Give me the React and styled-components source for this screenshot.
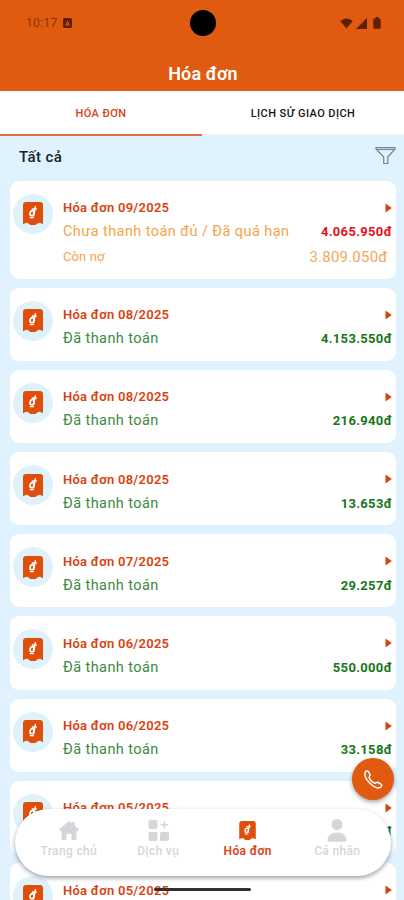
import React from "react";
import styled, { createGlobalStyle } from "styled-components";

const ORANGE = "#e05b10";
const RED = "#d9420f";

const GlobalStyle = createGlobalStyle`
  * { box-sizing: border-box; }
  body { margin: 0; overflow: hidden; font-family: Roboto, "Noto Sans", sans-serif; background: #dff2fe; }
  #root { height: 900px; }
`;

const Screen = styled.div`
  position: relative;
  width: 404px;
  height: 900px;
  overflow: hidden;
  display: flex;
  flex-direction: column;
  background: #dff2fe;
`;

const Header = styled.header`
  height: 90.5px;
  flex: none;
  background: ${ORANGE};
`;

const StatusBar = styled.div`
  height: 46px;
  padding: 0 23px 0 26px;
  display: grid;
  grid-template-columns: 1fr 26px 1fr;
  align-items: center;
  color: #5e1f05;
`;

const StatusGroup = styled.div`
  display: flex;
  align-items: center;
  justify-content: ${(p) => (p.$end ? "flex-end" : "flex-start")};
  gap: ${(p) => p.$gap}px;
`;

const Clock = styled.span`
  font-size: 12px;
  letter-spacing: 0.35px;
  color: #8a3409;
`;

const Camera = styled.div`
  width: 26px;
  height: 26px;
  margin-left: -1px;
  border-radius: 50%;
  background: #000;
`;

const PageTitle = styled.h1`
  margin: 16px 0 0;
  padding-left: 2px;
  text-align: center;
  font-size: 18px;
  line-height: 24px;
  font-weight: 600;
  letter-spacing: 0.1px;
  color: #fff;
`;

const Tabs = styled.nav`
  height: 45.5px;
  flex: none;
  display: grid;
  grid-template-columns: 1fr 1fr;
  background: #fff;
`;

const Tab = styled.div`
  display: flex;
  align-items: center;
  justify-content: center;
  padding-top: 2px;
  font-size: 11px;
  font-weight: 500;
  letter-spacing: ${(p) => (p.$active ? 0.4 : 0.42)}px;
  color: ${(p) => (p.$active ? RED : "#151515")};
  border-bottom: 2px solid ${(p) => (p.$active ? "#e2694a" : "#e9f3f8")};
`;

const FilterRow = styled.div`
  height: 44.5px;
  flex: none;
  display: flex;
  align-items: flex-start;
  justify-content: space-between;
  padding: 10px 8px 0 19px;
`;

const FilterLabel = styled.span`
  font-size: 15px;
  line-height: 22px;
  font-weight: 500;
  letter-spacing: 0.4px;
  color: #15232b;
`;

const List = styled.main`
  display: flex;
  flex-direction: column;
  gap: 9px;
  padding: 0 8px 0 9.5px;
`;

const Card = styled.article`
  height: ${(p) => (p.$tall ? 98.2 : 73.2)}px;
  flex: none;
  display: flex;
  gap: 10px;
  padding: 13px 4.5px 0 3.5px;
  border-radius: 9px;
  background: #fff;
`;

const IconDisc = styled.div`
  width: 40px;
  height: 40px;
  flex: none;
  display: flex;
  align-items: center;
  justify-content: center;
  border-radius: 50%;
  background: #dff2fc;
`;

const Details = styled.div`
  flex: 1;
  padding-top: 3px;
`;

const Line = styled.div`
  display: flex;
  align-items: center;
  justify-content: space-between;
  height: ${(p) => p.$h || 24}px;
  padding-right: ${(p) => p.$inset || 0}px;
`;

const BillName = styled.span`
  font-size: 13px;
  font-weight: 600;
  letter-spacing: 0.26px;
  color: ${RED};
`;

const State = styled.span`
  font-size: ${(p) => (p.$small ? 13 : 14.5)}px;
  letter-spacing: ${(p) => (p.$small ? 0.1 : 0.43)}px;
  color: ${(p) => (p.$due ? "#f7a348" : "#3b8a3f")};
`;

const Amount = styled.span`
  font-size: 13px;
  font-weight: 700;
  letter-spacing: 0.33px;
  margin-right: -0.7px;
  color: ${(p) => (p.$due ? "#e8101c" : "#17761b")};
`;

const Remaining = styled.span`
  font-size: 15px;
  letter-spacing: 0.22px;
  color: #f2a75b;
`;

const CallButton = styled.button`
  position: absolute;
  left: 352px;
  top: 758px;
  width: 42px;
  height: 42px;
  padding: 0;
  border: 0;
  border-radius: 50%;
  display: flex;
  align-items: center;
  justify-content: center;
  background: ${ORANGE};
  box-shadow: 0 2px 4px rgba(40, 60, 75, 0.45);
`;

const BottomNav = styled.nav`
  position: absolute;
  left: 15px;
  top: 809px;
  width: 376px;
  height: 66.5px;
  padding: 10px 9px 0;
  display: grid;
  grid-template-columns: repeat(4, 1fr);
  border-radius: 34px;
  background: #fff;
  box-shadow: 0 2px 4px rgba(30, 45, 55, 0.45);
`;

const NavItem = styled.div`
  display: flex;
  flex-direction: column;
  align-items: center;
  font-size: 12px;
  line-height: 18px;
  font-weight: ${(p) => (p.$active ? 600 : 500)};
  letter-spacing: 0.35px;
  color: ${(p) => (p.$active ? RED : "#d3d6da")};
`;

const NavIcon = styled.div`
  height: 23px;
  display: flex;
  align-items: center;
`;

const HomeIndicator = styled.div`
  position: absolute;
  left: 154px;
  top: 888px;
  width: 97px;
  height: 3px;
  border-radius: 2px;
  background: #303030;
`;

const BillIcon = ({ w = 20, h = 23 }) => (
  <svg width={w} height={h} viewBox="0 0 20 23">
    <path d="M3 0h14a3 3 0 0 1 3 3v19.200l-3-1.400q-1.500-.4-2.500.7L12.500 23h-5L5.500 21.500q-1-1.100-2.500-.7L0 22.200V3a3 3 0 0 1 3-3z" fill="#df4f0b" />
    <path d="M7.500 23l1.200-1h2.600l1.200 1z" fill="#df4f0b" />
    <g fill="none" stroke="#fff" strokeLinecap="round">
      <path d="M12.300 4.800L10.700 13.700M9.300 6.900h4" strokeWidth="1.500" />
      <ellipse cx="9" cy="11.200" rx="1.900" ry="2.600" transform="rotate(12 9 11.200)" strokeWidth="1.700" />
      <path d="M7.200 15.700h3.200" strokeWidth="1.200" />
    </g>
  </svg>
);

const Arrow = () => (
  <svg width="7" height="10" viewBox="0 0 7 10">
    <path d="M0.5 0.5L6.8 5L0.5 9.5z" fill="#d9420f" />
  </svg>
);

const Funnel = () => (
  <svg width="21" height="19" viewBox="0 0 21 19" fill="none" stroke="#75848c" strokeWidth="1.2" strokeLinejoin="round">
    <path d="M1 1.500h19v1.500L12.800 11v6.500H8.700V11L1 3z M1.200 3.400h18.600" />
  </svg>
);

const AppBadge = () => (
  <svg width="9" height="10" viewBox="0 0 9 10">
    <rect width="9" height="10" rx="1.5" fill="#5e1f05" />
    <path d="M2.2 7.5L4.5 2.3L6.8 7.5z" fill={ORANGE} />
    <path d="M4 5.5h1v1H4z" fill="#5e1f05" />
  </svg>
);

const Wifi = () => (
  <svg width="13" height="11" viewBox="0 0 13 11" fill="#5e1f05">
    <path d="M6.5 10.5L.2 3.1Q6.5-1.9 12.8 3.1z" />
  </svg>
);

const Signal = () => (
  <svg width="11" height="11" viewBox="0 0 11 11" fill="#5e1f05">
    <path d="M0 11L11 0v11z" />
  </svg>
);

const Battery = () => (
  <svg width="8" height="12" viewBox="0 0 8 12" fill="#5e1f05">
    <path d="M2.6 0h2.8v1.4H7a.7.7 0 0 1 .7.7v9a.7.7 0 0 1-.7.7H1a.7.7 0 0 1-.7-.7v-9a.7.7 0 0 1 .7-.7h1.6z" />
  </svg>
);

const Phone = () => (
  <svg width="19" height="19" viewBox="0 0 19 19" fill="none" stroke="#fff" strokeWidth="1.5" strokeLinejoin="round" strokeLinecap="round">
    <path d="M1.2 2.2C1.8.7 3.6.5 4.4 1.7L6 4.5c.6 1.1-.5 1.8-.9 2.7.9 2.6 3.4 5.100 6.100 6.100.9-.4 1.700-1.400 2.800-.8l3 1.700c1 .7.8 2.400-.7 3.200-2.600 1.400-7-.8-10.600-4.400S.2 4.800 1.200 2.200z" />
  </svg>
);

const Home = () => (
  <svg width="20" height="19" viewBox="0 0 20 19" fill="#d3d6da">
    <path d="M10 0l2.800 2.300V1H16v4l4 3.600-1.300 1.700-1.200-.8V17.500a1.500 1.500 0 0 1-1.500 1.500h-3.500v-6h-5v6H4a1.500 1.500 0 0 1-1.500-1.500V9.500l-1.200.8L0 8.600z" />
  </svg>
);

const Services = () => (
  <svg width="21" height="21" viewBox="0 0 21 21" fill="#d3d6da">
    <rect x="0.500" y="0" width="9" height="9" rx="1.800" />
    <rect x="0.500" y="12" width="9" height="9" rx="1.800" />
    <rect x="12" y="12" width="9" height="9" rx="1.800" />
    <path d="M15.600 1h1.500v3h3v1.500h-3v3h-1.500v-3h-3V4h3z" />
  </svg>
);

const Person = () => (
  <svg width="20" height="23" viewBox="0 0 20 23" fill="#d3d6da">
    <circle cx="10" cy="5.500" r="5.500" />
    <path d="M.5 21.500C.5 16.500 4 13.500 10 13.500s9.500 3 9.500 8c0 .9-.6 1.300-1.500 1.300H2c-.9 0-1.500-.4-1.500-1.300z" />
  </svg>
);

const bills = [
  { month: "09/2025", amount: "4.065.950đ", state: "Chưa thanh toán đủ / Đã quá hạn", remaining: "3.809.050đ" },
  { month: "08/2025", amount: "4.153.550đ" },
  { month: "08/2025", amount: "216.940đ" },
  { month: "08/2025", amount: "13.653đ" },
  { month: "07/2025", amount: "29.257đ" },
  { month: "06/2025", amount: "550.000đ" },
  { month: "06/2025", amount: "33.158đ" },
  { month: "05/2025", amount: "đ", covered: true },
  { month: "05/2025", amount: "", covered: true },
];

const Bill = ({ bill }) => {
  const due = Boolean(bill.remaining);
  return (
    <Card $tall={due}>
      <IconDisc><BillIcon /></IconDisc>
      <Details>
        <Line $h={22}>
          <BillName>Hóa đơn {bill.month}</BillName>
          <Arrow />
        </Line>
        <Line $h={26}>
          <State $due={due}>{bill.covered ? "" : bill.state || "Đã thanh toán"}</State>
          <Amount $due={due}>{bill.amount}</Amount>
        </Line>
        {due && (
          <Line $inset={4}>
            <State $due $small>Còn nợ</State>
            <Remaining>{bill.remaining}</Remaining>
          </Line>
        )}
      </Details>
    </Card>
  );
};

const navItems = [
  { label: "Trang chủ", icon: <Home /> },
  { label: "Dịch vụ", icon: <Services /> },
  { label: "Hóa đơn", icon: <BillIcon w={17} h={19} />, active: true },
  { label: "Cá nhân", icon: <Person /> },
];

export default function App() {
  return (
    <Screen>
      <GlobalStyle />
      <Header>
        <StatusBar>
          <StatusGroup $gap={5}><Clock>10:17</Clock><AppBadge /></StatusGroup>
          <Camera />
          <StatusGroup $end $gap={3}><Wifi /><Signal /><span /><Battery /></StatusGroup>
        </StatusBar>
        <PageTitle>Hóa đơn</PageTitle>
      </Header>
      <Tabs>
        <Tab $active>HÓA ĐƠN</Tab>
        <Tab>LỊCH SỬ GIAO DỊCH</Tab>
      </Tabs>
      <FilterRow>
        <FilterLabel>Tất cả</FilterLabel>
        <Funnel />
      </FilterRow>
      <List>
        {bills.map((bill, i) => <Bill key={i} bill={bill} />)}
      </List>
      <CallButton aria-label="Gọi"><Phone /></CallButton>
      <BottomNav>
        {navItems.map((item) => (
          <NavItem key={item.label} $active={item.active}>
            <NavIcon>{item.icon}</NavIcon>
            {item.label}
          </NavItem>
        ))}
      </BottomNav>
      <HomeIndicator />
    </Screen>
  );
}
